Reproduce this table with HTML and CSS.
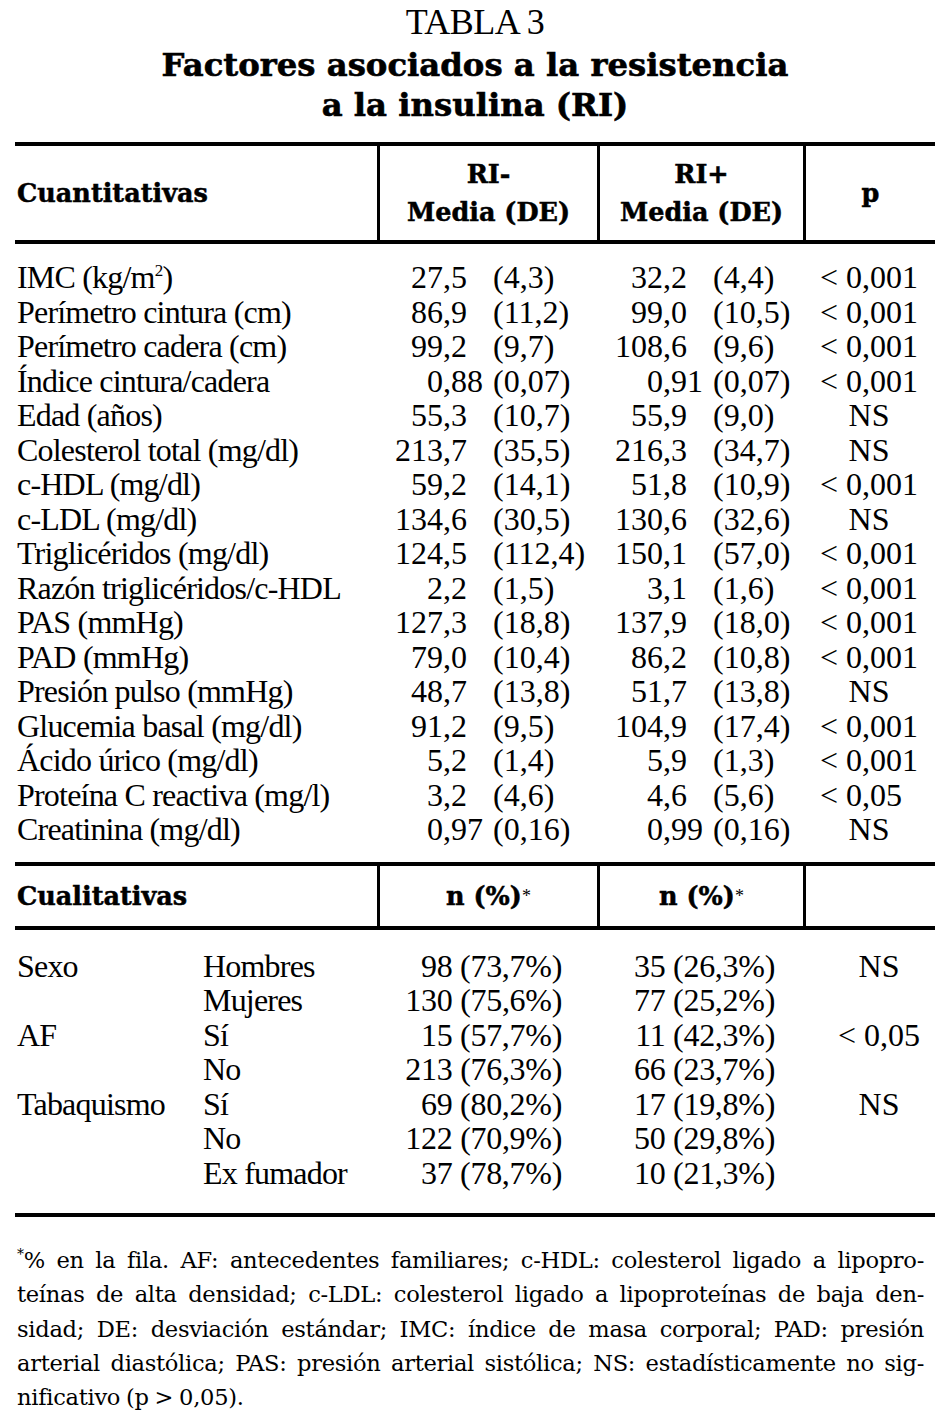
FILE: index.html
```html
<!DOCTYPE html>
<html lang="es">
<head>
<meta charset="utf-8">
<title>Tabla 3</title>
<link rel="stylesheet" href="styles.css">
</head>
<body>
<div class="page">
  <header class="caption">
    <div class="tabla">TABLA 3</div>
    <h1 class="title">Factores asociados a la resistencia<br>a la insulina (RI)</h1>
  </header>

  <section class="tbl">
    <div class="hrow quant-head">
      <div class="hc first">Cuantitativas</div>
      <div class="hc">RI-<br>Media (DE)</div>
      <div class="hc">RI+<br>Media (DE)</div>
      <div class="hc">p</div>
    </div>
    <div class="tbody quant">
      <div class="row"><div class="lab">IMC (kg/m<sup>2</sup>)</div><div class="val"><span class="num">27,5</span><span class="sd">(4,3)</span></div><div class="val"><span class="num">32,2</span><span class="sd">(4,4)</span></div><div class="pv">&lt; 0,001</div></div>
      <div class="row"><div class="lab">Perímetro cintura (cm)</div><div class="val"><span class="num">86,9</span><span class="sd">(11,2)</span></div><div class="val"><span class="num">99,0</span><span class="sd">(10,5)</span></div><div class="pv">&lt; 0,001</div></div>
      <div class="row"><div class="lab">Perímetro cadera (cm)</div><div class="val"><span class="num">99,2</span><span class="sd">(9,7)</span></div><div class="val"><span class="num">108,6</span><span class="sd">(9,6)</span></div><div class="pv">&lt; 0,001</div></div>
      <div class="row"><div class="lab">Índice cintura/cadera</div><div class="val"><span class="num w2">0,88</span><span class="sd">(0,07)</span></div><div class="val"><span class="num w2">0,91</span><span class="sd">(0,07)</span></div><div class="pv">&lt; 0,001</div></div>
      <div class="row"><div class="lab">Edad (años)</div><div class="val"><span class="num">55,3</span><span class="sd">(10,7)</span></div><div class="val"><span class="num">55,9</span><span class="sd">(9,0)</span></div><div class="pv">NS</div></div>
      <div class="row"><div class="lab">Colesterol total (mg/dl)</div><div class="val"><span class="num">213,7</span><span class="sd">(35,5)</span></div><div class="val"><span class="num">216,3</span><span class="sd">(34,7)</span></div><div class="pv">NS</div></div>
      <div class="row"><div class="lab">c-HDL (mg/dl)</div><div class="val"><span class="num">59,2</span><span class="sd">(14,1)</span></div><div class="val"><span class="num">51,8</span><span class="sd">(10,9)</span></div><div class="pv">&lt; 0,001</div></div>
      <div class="row"><div class="lab">c-LDL (mg/dl)</div><div class="val"><span class="num">134,6</span><span class="sd">(30,5)</span></div><div class="val"><span class="num">130,6</span><span class="sd">(32,6)</span></div><div class="pv">NS</div></div>
      <div class="row"><div class="lab">Triglicéridos (mg/dl)</div><div class="val"><span class="num">124,5</span><span class="sd">(112,4)</span></div><div class="val"><span class="num">150,1</span><span class="sd">(57,0)</span></div><div class="pv">&lt; 0,001</div></div>
      <div class="row"><div class="lab">Razón triglicéridos/c-HDL</div><div class="val"><span class="num">2,2</span><span class="sd">(1,5)</span></div><div class="val"><span class="num">3,1</span><span class="sd">(1,6)</span></div><div class="pv">&lt; 0,001</div></div>
      <div class="row"><div class="lab">PAS (mmHg)</div><div class="val"><span class="num">127,3</span><span class="sd">(18,8)</span></div><div class="val"><span class="num">137,9</span><span class="sd">(18,0)</span></div><div class="pv">&lt; 0,001</div></div>
      <div class="row"><div class="lab">PAD (mmHg)</div><div class="val"><span class="num">79,0</span><span class="sd">(10,4)</span></div><div class="val"><span class="num">86,2</span><span class="sd">(10,8)</span></div><div class="pv">&lt; 0,001</div></div>
      <div class="row"><div class="lab">Presión pulso (mmHg)</div><div class="val"><span class="num">48,7</span><span class="sd">(13,8)</span></div><div class="val"><span class="num">51,7</span><span class="sd">(13,8)</span></div><div class="pv">NS</div></div>
      <div class="row"><div class="lab">Glucemia basal (mg/dl)</div><div class="val"><span class="num">91,2</span><span class="sd">(9,5)</span></div><div class="val"><span class="num">104,9</span><span class="sd">(17,4)</span></div><div class="pv">&lt; 0,001</div></div>
      <div class="row"><div class="lab">Ácido úrico (mg/dl)</div><div class="val"><span class="num">5,2</span><span class="sd">(1,4)</span></div><div class="val"><span class="num">5,9</span><span class="sd">(1,3)</span></div><div class="pv">&lt; 0,001</div></div>
      <div class="row"><div class="lab">Proteína C reactiva (mg/l)</div><div class="val"><span class="num">3,2</span><span class="sd">(4,6)</span></div><div class="val"><span class="num">4,6</span><span class="sd">(5,6)</span></div><div class="pv left">&lt; 0,05</div></div>
      <div class="row"><div class="lab">Creatinina (mg/dl)</div><div class="val"><span class="num w2">0,97</span><span class="sd">(0,16)</span></div><div class="val"><span class="num w2">0,99</span><span class="sd">(0,16)</span></div><div class="pv">NS</div></div>
    </div>

    <div class="hrow qual-head">
      <div class="hc first">Cualitativas</div>
      <div class="hc">n (%)<sup>*</sup></div>
      <div class="hc">n (%)<sup>*</sup></div>
      <div class="hc"></div>
    </div>
    <div class="tbody qual">
      <div class="row"><div class="lab"><span class="qa">Sexo</span><span class="qb">Hombres</span></div><div class="qv a">98 (73,7%)</div><div class="qv b">35 (26,3%)</div><div class="qp">NS</div></div>
      <div class="row"><div class="lab"><span class="qa"></span><span class="qb">Mujeres</span></div><div class="qv a">130 (75,6%)</div><div class="qv b">77 (25,2%)</div><div class="qp"></div></div>
      <div class="row"><div class="lab"><span class="qa">AF</span><span class="qb">Sí</span></div><div class="qv a">15 (57,7%)</div><div class="qv b">11 (42,3%)</div><div class="qp">&lt; 0,05</div></div>
      <div class="row"><div class="lab"><span class="qa"></span><span class="qb">No</span></div><div class="qv a">213 (76,3%)</div><div class="qv b">66 (23,7%)</div><div class="qp"></div></div>
      <div class="row"><div class="lab"><span class="qa">Tabaquismo</span><span class="qb">Sí</span></div><div class="qv a">69 (80,2%)</div><div class="qv b">17 (19,8%)</div><div class="qp">NS</div></div>
      <div class="row"><div class="lab"><span class="qa"></span><span class="qb">No</span></div><div class="qv a">122 (70,9%)</div><div class="qv b">50 (29,8%)</div><div class="qp"></div></div>
      <div class="row"><div class="lab"><span class="qa"></span><span class="qb">Ex fumador</span></div><div class="qv a">37 (78,7%)</div><div class="qv b">10 (21,3%)</div><div class="qp"></div></div>
    </div>
  </section>

  <footer class="note">
    <span class="fl"><sup>*</sup>% en la fila. AF: antecedentes familiares; c-HDL: colesterol ligado a lipopro-</span>
    <span class="fl">teínas de alta densidad; c-LDL: colesterol ligado a lipoproteínas de baja den-</span>
    <span class="fl">sidad; DE: desviación estándar; IMC: índice de masa corporal; PAD: presión</span>
    <span class="fl">arterial diastólica; PAS: presión arterial sistólica; NS: estadísticamente no sig-</span>
    <span class="fl last">nificativo (p &gt; 0,05).</span>
  </footer>
</div>
</body>
</html>
```

FILE: styles.css
```css
* { box-sizing: border-box; }

html, body {
  margin: 0;
  padding: 0;
  background: #fff;
  color: #000;
}

body {
  font-family: "Liberation Serif", "Times New Roman", serif;
  font-size: 32px;
}

.page {
  width: 942px;
  padding: 2px 7px 0 15px;
}

/* caption */
.caption {
  text-align: center;
}

.tabla {
  font-size: 36px;
  line-height: 40px;
  letter-spacing: -0.5px;
}

.title {
  margin: 3px 0 0;
  font-family: "DejaVu Serif", serif;
  font-weight: bold;
  font-size: 32.3px;
  line-height: 40px;
  -webkit-text-stroke: 0.6px #000;
}

/* table */
.tbl {
  margin-top: 17px;
  width: 920px;
}

.hrow,
.row {
  display: grid;
  grid-template-columns: 362px 220px 206px 132px;
}

.hrow {
  border-top: 4px solid #000;
  border-bottom: 4px solid #000;
  font-family: "DejaVu Serif", serif;
  font-weight: bold;
  font-size: 25.5px;
  -webkit-text-stroke: 0.5px #000;
}

.quant-head { height: 102px; }
.qual-head { height: 68px; }

.hc {
  display: flex;
  align-items: center;
  justify-content: center;
  text-align: center;
  line-height: 38px;
  border-left: 3px solid #000;
}

.hc.first {
  border-left: 0;
  justify-content: flex-start;
  padding-left: 2px;
}

.hc sup {
  font-family: "Liberation Serif", serif;
  font-weight: normal;
  font-size: 18px;
  line-height: 0;
  vertical-align: 10px;
  -webkit-text-stroke: 0;
}

.tbody .row {
  line-height: 34.5px;
  height: 34.5px;
}

.quant { padding: 16px 0 15px; }
.qual { padding: 19px 0 23px; border-bottom: 4px solid #000; }

.lab {
  padding-left: 2px;
  letter-spacing: -0.8px;
  white-space: nowrap;
}

.lab sup {
  font-size: 17px;
  line-height: 0;
  vertical-align: 12px;
}

.val {
  display: flex;
  white-space: nowrap;
}

.num {
  width: 106px;
  text-align: right;
  padding-right: 16px;
}

.num.w2 { padding-right: 0; }

.sd { margin-left: 10px; }

.pv {
  text-align: center;
  white-space: nowrap;
}

.pv.left {
  text-align: left;
  padding-left: 17px;
}

/* qualitative */
.qa {
  display: inline-block;
  width: 186px;
}

.qv {
  text-align: right;
  white-space: nowrap;
  letter-spacing: -0.3px;
}

.qv.a { padding-right: 35px; }
.qv.b { padding-right: 28px; }

.qp {
  text-align: center;
  padding-left: 20px;
  white-space: nowrap;
}

/* footnote */
.note {
  margin-top: 26px;
  width: 907px;
  margin-left: 2px;
  font-family: "DejaVu Serif", serif;
  font-size: 22.6px;
  letter-spacing: -0.3px;
  word-spacing: -1px;
  line-height: 34.3px;
}

.fl {
  display: block;
  text-align: justify;
  text-align-last: justify;
}

.fl.last {
  text-align-last: left;
}

.note sup {
  font-size: 14px;
  line-height: 0;
  vertical-align: 9px;
}
```
